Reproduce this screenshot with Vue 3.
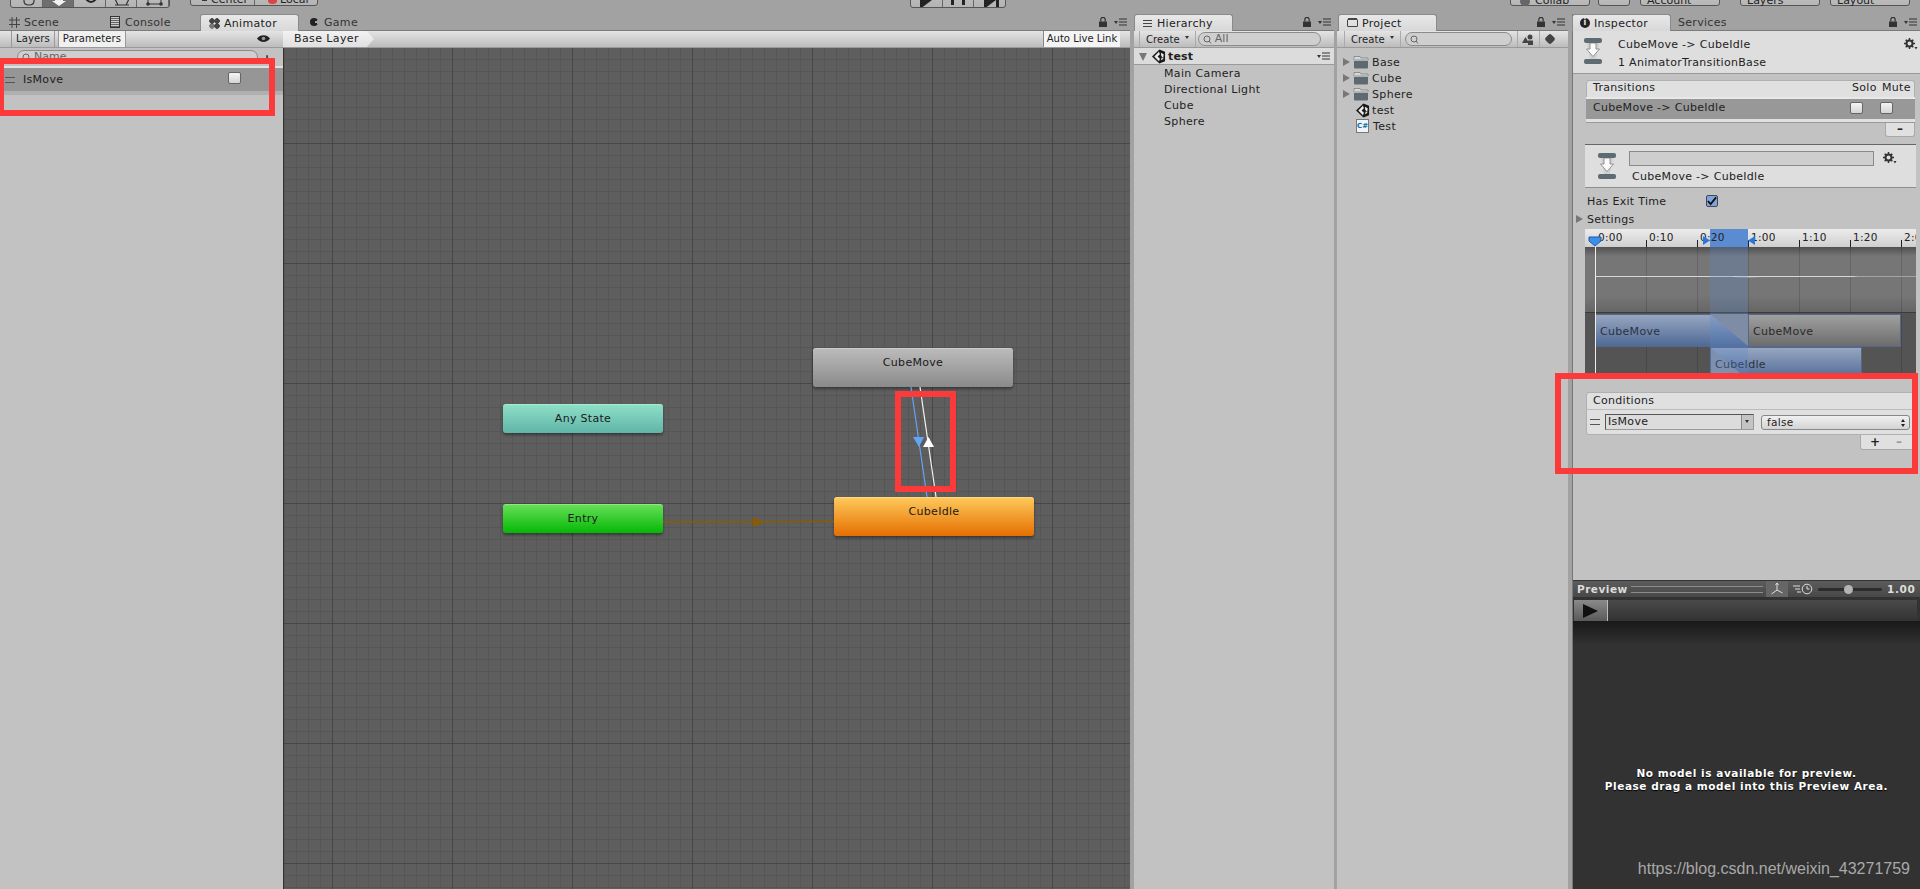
<template>
  <div class="editor">
    <svg class="defs" width="0" height="0">
      <symbol id="unity" viewBox="0 0 16 16">
        <path d="M9 .5 15 3v10l-6 2.500L1 8z" fill="#1a1a1a" />
        <path d="M8.500 3 3.500 8l5 5 1-2.500L7 8l2.500-2.500zM10.500 4l3 1.500-.5 4-2-2zM10.500 12l3-1.500-2-1.500z" fill="#eee" />
      </symbol>
      <symbol id="folder" viewBox="0 0 16 14">
        <path d="M1 3V1.500h6L8 3h7v2H1z" fill="#d8d8d8" stroke="#666" stroke-width=".6" />
        <rect x="1" y="4" width="14" height="9.500" rx="1" fill="#5f6a70" />
        <rect x="1" y="4" width="14" height="2" fill="#aeb4b7" />
      </symbol>
      <symbol id="lock" viewBox="0 0 8 10">
        <path d="M1.800 4.500V2.600a2.200 2.200 0 0 1 4.400 0v1.900" fill="none" stroke="#333" stroke-width="1.200" />
        <rect x="0" y="4.500" width="8" height="5.500" fill="#333" />
      </symbol>
      <symbol id="menu" viewBox="0 0 13 8">
        <path d="M0 3h4L2 6z" fill="#333" />
        <path d="M5 1h8M5 4h8M5 7h8" stroke="#333" stroke-width="1" />
      </symbol>
      <symbol id="gear" viewBox="0 0 14 12">
        <circle cx="5.500" cy="5.500" r="3" fill="none" stroke="#333" stroke-width="2" />
        <path d="M5.500 0v2M5.500 9v2M0 5.500h2M9 5.500h2M1.700 1.700l1.400 1.400M7.900 7.900l1.400 1.400M9.300 1.700 7.900 3.100M3.100 7.900 1.700 9.300" stroke="#333" stroke-width="1.500" />
        <path d="M10.500 9h3l-1.500 2.500z" fill="#333" />
      </symbol>
      <symbol id="transition" viewBox="0 0 18 26">
        <path d="M3 5h12l-3 16H6z" fill="#cfcfcf" />
        <path d="M6 5h6v6h3.500L9 18.500 2.500 11H6z" fill="#fafafa" stroke="#7e7e7e" stroke-width=".8" />
        <rect x="0" y="0" width="18" height="5" rx="2" fill="#5d6b72" />
        <rect x="0" y="21" width="18" height="5" rx="2" fill="#5d6b72" />
      </symbol>
      <symbol id="mag" viewBox="0 0 14 9">
        <circle cx="4" cy="4" r="3" fill="none" stroke="#666" />
        <path d="M6 6l2 2.500" stroke="#666" />
      </symbol>
    </svg>

    <header class="topbar">
      <div class="btn-group tools">
        <span v-for="n in 5" :key="n" :class="{ pressed: n === 2 }"></span>
        <svg class="tool-icons" width="160" height="8" viewBox="0 0 160 8">
          <path d="M13 0v2q0 4 5 4t5-4V0" fill="none" stroke="#333" stroke-width="1.200" />
          <path d="M44 0h8v2h3l-7 5-7-5h3z" fill="#f2f2f2" />
          <path d="M75 0q5 6 10 0" fill="none" stroke="#222" stroke-width="2" />
          <path d="M104 6h14M104 0l3 6M118 0l-3 6" fill="none" stroke="#333" stroke-width="1.200" />
          <path d="M137 5h13" stroke="#333" />
          <circle cx="137" cy="5" r="1.800" fill="#333" />
          <circle cx="150" cy="5" r="1.800" fill="#333" />
          <path d="M137 0v5M150 0v5" stroke="#333" />
        </svg>
      </div>
      <div class="btn-group pivot">
        <span class="center"><i class="pin-dot"></i>Center</span>
        <span class="local"><i class="pin-red"></i>Local</span>
      </div>
      <div class="btn-group play">
        <span><i class="tri"></i></span><span><i class="pause"></i></span><span><i class="tri step"></i></span>
      </div>
      <div class="right-btns">
        <span class="top-btn collab"><i class="cloud-dot"></i>Collab</span>
        <span class="top-btn cloud"></span>
        <span class="top-btn account">Account</span>
        <span class="top-btn layers">Layers</span>
        <span class="top-btn layout">Layout</span>
      </div>
    </header>

    <main class="dock">
      <!-- animator -->
      <section class="pane animator">
        <div class="tabs">
          <span class="tab plain scene-tab">
            <svg class="hash" width="11" height="11" viewBox="0 0 11 11"><path d="M3 0v11M7.500 0v11M0 3h11M0 7.500h11" stroke="#444" /></svg>
            Scene
          </span>
          <span class="tab plain console-tab"><i class="doc"></i>Console</span>
          <span class="tab active animator-tab"><i class="dots"></i>Animator</span>
          <span class="tab plain game-tab"><i class="pac"></i>Game</span>
          <span class="tab-tools">
            <svg width="8" height="10"><use href="#lock" /></svg>
            <svg width="13" height="8"><use href="#menu" /></svg>
          </span>
        </div>
        <div class="animator-body">
          <aside class="params">
            <div class="toolbar params-bar">
              <span class="param-tab">Layers</span>
              <span class="param-tab on">Parameters</span>
              <svg class="eye" width="13" height="9" viewBox="0 0 13 9">
                <path d="M0 4.500C3 0 10 0 13 4.500 10 9 3 9 0 4.500z" fill="#222" />
                <circle cx="6.500" cy="4.500" r="1.800" fill="#999" />
              </svg>
            </div>
            <div class="param-search">
              <span class="search-pill"><svg width="14" height="9"><use href="#mag" /></svg>Name</span>
              <b>+</b>
            </div>
            <div class="param-row">
              <span class="grip"></span>
              <span class="param-name">IsMove</span>
              <span class="check"></span>
            </div>
          </aside>
          <div class="graph-col">
            <div class="toolbar graph-bar">
              <span class="crumb">Base Layer</span>
              <span class="live">Auto Live Link</span>
            </div>
            <div class="graph">
              <div class="node any" style="left: 220px; top: 356px">Any State</div>
              <div class="node entry" style="left: 220px; top: 456px">Entry</div>
              <div class="node move" style="left: 530px; top: 300px">CubeMove</div>
              <div class="node idle" style="left: 551px; top: 449px">CubeIdle</div>
              <svg class="wires" width="847" height="841">
                <path d="M380 474 551 473.500" stroke="#8a5c00" stroke-width="1.500" />
                <path d="M470 469 481 474 470 479z" fill="#8a5c00" />
                <path d="M628 339 644 449" stroke="#62a5f5" stroke-width="1.200" />
                <path d="M630 389 641 389 636 399z" fill="#62a5f5" />
                <path d="M637 339 653 449" stroke="#f2f2f2" stroke-width="1.200" />
                <path d="M640 399 651 399 645.500 389z" fill="#fff" />
              </svg>
            </div>
          </div>
        </div>
      </section>

      <!-- hierarchy -->
      <section class="pane hierarchy">
        <div class="tabs">
          <span class="tab active hier-tab"><i class="list"></i>Hierarchy</span>
          <span class="tab-tools">
            <svg width="8" height="10"><use href="#lock" /></svg>
            <svg width="13" height="8"><use href="#menu" /></svg>
          </span>
        </div>
        <div class="toolbar">
          <span class="create">Create<i class="caret"></i></span>
          <span class="search-pill hier-search"><svg width="14" height="9"><use href="#mag" /></svg>All</span>
        </div>
        <div class="scene-head">
          <i class="down"></i>
          <svg width="15" height="15"><use href="#unity" /></svg>
          <b>test</b>
          <svg class="scene-menu" width="13" height="8"><use href="#menu" /></svg>
        </div>
        <div class="pane-body hier-list">
          <div v-for="item in hierarchyItems" :key="item" class="hier-item">{{ item }}</div>
        </div>
      </section>

      <!-- project -->
      <section class="pane project">
        <div class="tabs">
          <span class="tab active proj-tab"><i class="mini-folder"></i>Project</span>
          <span class="tab-tools">
            <svg width="8" height="10"><use href="#lock" /></svg>
            <svg width="13" height="8"><use href="#menu" /></svg>
          </span>
        </div>
        <div class="toolbar">
          <span class="create">Create<i class="caret"></i></span>
          <span class="search-pill proj-search"><svg width="14" height="9"><use href="#mag" /></svg></span>
          <span class="tool-ico first">
            <svg width="12" height="11" viewBox="0 0 12 11">
              <path d="M0 9 3.500 3 7 9z" fill="#444" />
              <circle cx="8" cy="3" r="2.500" fill="#444" />
              <rect x="6" y="6.500" width="5" height="4.500" fill="#444" />
            </svg>
          </span>
          <span class="tool-ico"><i class="tag"></i></span>
        </div>
        <div class="pane-body proj-list">
          <div v-for="f in folders" :key="f" class="proj-item">
            <i class="right"></i>
            <svg width="16" height="14"><use href="#folder" /></svg>
            <span>{{ f }}</span>
          </div>
          <div class="proj-item asset">
            <svg width="15" height="15"><use href="#unity" /></svg>
            <span>test</span>
          </div>
          <div class="proj-item asset">
            <span class="cs">C#</span>
            <span>Test</span>
          </div>
        </div>
      </section>

      <!-- inspector -->
      <section class="pane inspector">
        <div class="tabs">
          <span class="tab active insp-tab"><i class="info">i</i>Inspector</span>
          <span class="tab plain serv-tab">Services</span>
          <span class="tab-tools">
            <svg width="8" height="10"><use href="#lock" /></svg>
            <svg width="13" height="8"><use href="#menu" /></svg>
          </span>
        </div>
        <div class="insp-body">
          <div class="insp-head">
            <svg width="18" height="26"><use href="#transition" /></svg>
            <div class="insp-title">
              <div>CubeMove -&gt; CubeIdle</div>
              <div>1 AnimatorTransitionBase</div>
            </div>
            <svg class="gear" width="14" height="12"><use href="#gear" /></svg>
          </div>

          <div class="rlist trans">
            <div class="rlist-head">
              <span>Transitions</span>
              <span class="solo">Solo</span>
              <span class="mute">Mute</span>
            </div>
            <div class="trans-row">
              <span>CubeMove -&gt; CubeIdle</span>
              <span class="check c1"></span>
              <span class="check c2"></span>
            </div>
            <div class="rlist-end"></div>
            <div class="rlist-foot minus-only">–</div>
          </div>

          <div class="sub-head">
            <svg width="18" height="26"><use href="#transition" /></svg>
            <div class="sub-main">
              <div class="name-field"></div>
              <div class="sub-label">CubeMove -&gt; CubeIdle</div>
            </div>
            <svg class="gear" width="14" height="12"><use href="#gear" /></svg>
          </div>

          <div class="exit-row">
            <span>Has Exit Time</span>
            <span class="checked">
              <svg width="10" height="10" viewBox="0 0 11 10"><path d="M1 5 4 8.500 10 1" fill="none" stroke="#111" stroke-width="2" /></svg>
            </span>
          </div>
          <div class="settings-row"><i class="right"></i>Settings</div>

          <div class="timeline">
            <div class="ruler">
              <div class="sel-top"></div>
              <span v-for="(t, i) in ticks" :key="t" class="tick" :style="{ left: 10 + i * 51 + 'px' }">{{ t }}</span>
            </div>
            <div class="curve-area">
              <i v-for="i in 7" :key="i" class="vline" :style="{ left: 10 + (i - 1) * 51 + 'px' }"></i>
              <div class="curve"></div>
              <div class="curve-bump"></div>
            </div>
            <div class="clips">
              <i v-for="i in 7" :key="i" class="vline" :style="{ left: 10 + (i - 1) * 51 + 'px' }"></i>
              <div class="clip blue c-a">CubeMove</div>
              <div class="clip gray c-b">CubeMove</div>
              <div class="clip blue c-c">CubeIdle</div>
              <svg class="wedge" width="38" height="33">
                <path d="M0 0H38V32z" fill="#8c8f96" />
              </svg>
            </div>
            <div class="sel-band"></div>
            <div class="playhead"></div>
            <svg class="head-pin" width="14" height="11" viewBox="0 0 14 11"><path d="M1 1h12v4l-6 5-6-5z" fill="#3d8ee8" stroke="#1b5da8" /></svg>
            <svg class="sel-a" width="7" height="9"><path d="M0 0 7 4.500 0 9z" fill="#2b78d8" /></svg>
            <svg class="sel-b" width="7" height="9"><path d="M7 0 0 4.500 7 9z" fill="#2b78d8" /></svg>
          </div>

          <div class="rlist cond">
            <div class="rlist-head"><span>Conditions</span></div>
            <div class="cond-row">
              <span class="grip"></span>
              <span class="param-select">IsMove<i class="sel-arrow"></i></span>
              <span class="bool-select">false<i class="updown"></i></span>
            </div>
            <div class="rlist-foot plus-minus"><b>+</b><span>–</span></div>
          </div>
        </div>

        <div class="preview">
          <div class="preview-head">
            <b class="pv-title">Preview</b>
            <span class="rails"></span>
            <span class="axis">
              <svg width="14" height="14" viewBox="0 0 14 14"><path d="M7 1v7M7 8 1.500 12M7 8l5.500 3M5.500 3 7 1l1.500 2" fill="none" stroke="#ddd" stroke-width="1" /></svg>
            </span>
            <svg class="clock" width="22" height="12" viewBox="0 0 22 12">
              <circle cx="15" cy="6" r="4.800" fill="none" stroke="#ddd" />
              <path d="M15 3v3h2.500M1 3h7M3 6h5M5 9h4" fill="none" stroke="#ddd" />
            </svg>
            <span class="slider"><i></i></span>
            <b class="speed">1.00</b>
          </div>
          <div class="preview-bar">
            <span class="pv-play"><i></i></span>
          </div>
          <div class="preview-msg">
            <p>No model is available for preview.</p>
            <p>Please drag a model into this Preview Area.</p>
          </div>
          <div class="watermark">https://blog.csdn.net/weixin_43271759</div>
        </div>
      </section>
    </main>

    <!-- annotations drawn on top of the shot -->
    <div class="mark m1"></div>
    <div class="mark m2"></div>
    <div class="mark m3"></div>
  </div>
</template>

<script setup>
const hierarchyItems = ['Main Camera', 'Directional Light', 'Cube', 'Sphere']
const folders = ['Base', 'Cube', 'Sphere']
const ticks = ['0:00', '0:10', '0:20', '1:00', '1:10', '1:20', '2:00']
</script>

<style>
html, body { margin: 0; background: #a2a2a2; overflow: hidden; }
</style>

<style scoped>
.editor {
  position: relative;
  width: 1920px;
  height: 889px;
  overflow: hidden;
  background: #a2a2a2;
  font-family: "DejaVu Sans", sans-serif;
  font-size: 11px;
  color: #222;
  display: flex;
  flex-direction: column;
}
.defs { position: absolute; }
i { display: block; }

/* top toolbar, cut off by the shot */
.topbar { height: 14px; position: relative; flex: none; display: flex; }
.btn-group {
  position: absolute;
  top: -12px;
  height: 20px;
  display: flex;
  border: 1px solid #555;
  border-radius: 3px;
  background: linear-gradient(#c0c0c0, #b4b4b4);
  overflow: hidden;
  box-sizing: border-box;
}
.btn-group span {
  flex: 1;
  border-right: 1px solid #666;
  text-align: center;
  font-size: 11px;
  position: relative;
}
.btn-group span:last-child { border-right: 0; }
.btn-group .pressed { background: #6f6f6f; }
.tools { left: 10px; width: 160px; }
.tool-icons { position: absolute; left: 0; bottom: 0; }
.pivot { left: 190px; width: 128px; height: 18px; }
.btn-group.pivot span { line-height: 22px; text-align: left; box-sizing: border-box; flex: none; white-space: nowrap; }
.btn-group.pivot .center { width: 64px; padding-left: 20px; }
.btn-group.pivot .local { width: 62px; padding-left: 25px; }
.pin-dot { position: absolute; left: 11px; top: 9px; width: 5px; height: 3px; background: #333; }
.pin-red { position: absolute; left: 13px; top: 8px; width: 9px; height: 7px; border-radius: 50%; background: #d44; }
.play { left: 910px; width: 96px; }
.tri { width: 0; height: 0; border-left: 12px solid #222; border-top: 9px solid transparent; border-bottom: 9px solid transparent; margin: 2px auto 0; }
.tri.step { box-shadow: 3px 0 0 #222; }
.pause { width: 8px; height: 16px; border-left: 3px solid #222; border-right: 3px solid #222; margin: 0 auto; }
.top-btn {
  position: absolute;
  top: -12px;
  height: 18px;
  border: 1px solid #555;
  border-radius: 3px;
  background: linear-gradient(#c6c6c6, #b6b6b6);
  box-sizing: border-box;
  padding-left: 6px;
  line-height: 23px;
  white-space: nowrap;
}
.collab { left: 1510px; width: 80px; padding-left: 24px; }
.cloud-dot { position: absolute; left: 9px; top: 8px; width: 10px; height: 9px; border-radius: 50%; background: #666; }
.cloud { left: 1598px; width: 32px; }
.account { left: 1640px; width: 80px; }
.layers { left: 1740px; width: 80px; }
.layout { left: 1830px; width: 80px; }

/* dock */
.dock { flex: 1; display: flex; min-height: 0; }
.pane { display: flex; flex-direction: column; min-width: 0; }
.animator { width: 1130px; }
.hierarchy { width: 200px; margin-left: 4px; }
.project { width: 231px; margin-left: 3px; }
.inspector { width: 348px; margin-left: 4px; border-left: 1px solid #777; box-sizing: border-box; }

.tabs {
  height: 17px;
  flex: none;
  display: flex;
  align-items: flex-end;
  position: relative;
  border-bottom: 1px solid #7b7b7b;
  box-sizing: border-box;
}
.tab {
  position: absolute;
  bottom: 0;
  height: 16px;
  display: flex;
  align-items: center;
  box-sizing: border-box;
  letter-spacing: .3px;
  white-space: nowrap;
}
.tab.plain { color: #333; }
.tab.active {
  background: linear-gradient(#e8e8e8, #d8d8d8);
  border: 1px solid #8a8a8a;
  border-bottom: 0;
  border-radius: 3px 3px 0 0;
  bottom: -1px;
  height: 17px;
  width: 99px;
}
.scene-tab { left: 9px; }
.hash { margin-right: 4px; flex: none; }
.console-tab { left: 110px; }
.doc { width: 8px; height: 10px; border: 1px solid #333; margin-right: 5px; background: repeating-linear-gradient(#ccc 0 1px, #666 1px 2px); }
.animator-tab { left: 200px; padding-left: 8px; }
.dots { width: 11px; height: 11px; margin-right: 4px; background: radial-gradient(circle at 3px 3px, #444 2.500px, transparent 3px), radial-gradient(circle at 8px 3px, #444 2.500px, transparent 3px), radial-gradient(circle at 8px 8px, #444 2.500px, transparent 3px), radial-gradient(circle at 3px 8px, #777 2.500px, transparent 3px); }
.game-tab { left: 310px; }
.pac { width: 8px; height: 8px; border-radius: 50%; margin-right: 6px; background: conic-gradient(#222 0 60deg, transparent 60deg 120deg, #222 120deg); }
.tab-tools { position: absolute; right: 3px; bottom: 3px; display: flex; align-items: center; gap: 7px; }
.hier-tab { left: 0; padding-left: 8px; }
.list { width: 9px; height: 7px; margin-right: 5px; background: repeating-linear-gradient(#444 0 1px, transparent 1px 3px); }
.proj-tab { left: 1px; padding-left: 8px; }
.mini-folder { width: 9px; height: 6px; border: 1px solid #444; margin-right: 4px; border-radius: 1px; box-shadow: 0 -2px 0 -1px #444; }
.insp-tab { left: -1px; padding-left: 7px; }
.info { width: 10px; height: 10px; border-radius: 50%; background: #222; color: #eee; font-size: 8px; line-height: 10px; text-align: center; font-style: normal; font-weight: 700; margin-right: 4px; }
.serv-tab { left: 105px; }

.toolbar {
  height: 17px;
  flex: none;
  display: flex;
  align-items: center;
  background: linear-gradient(#e4e4e4, #bcbcbc);
  border-bottom: 1px solid #9a9a9a;
  box-sizing: border-box;
  position: relative;
}
.animator-body { flex: 1; display: flex; min-height: 0; }
.params { width: 283px; flex: none; background: #c2c2c2; display: flex; flex-direction: column; }
.params-bar { padding-left: 11px; gap: 3px; }
.param-tab { height: 100%; padding: 0 4px; border-left: 1px solid #999; border-right: 1px solid #999; line-height: 16px; font-size: 10px; letter-spacing: .1px; box-sizing: border-box; }
.param-tab.on { background: #f0f0f0; }
.eye { position: absolute; right: 13px; top: 3px; }
.param-search { height: 18px; position: relative; flex: none; }
.param-search b { position: absolute; left: 262px; top: 4px; font-size: 12px; }
.search-pill {
  display: block;
  position: relative;
  flex: none;
  box-sizing: border-box;
  height: 14px;
  border: 1px solid #8c8c8c;
  border-radius: 7px;
  background: #cfcfcf;
  color: #666;
  line-height: 12px;
  padding-left: 16px;
}
.search-pill svg { position: absolute; left: 4px; top: 2px; }
.param-search .search-pill { position: absolute; left: 17px; top: 2px; width: 241px; }
.param-row {
  height: 29px;
  border-top: 2px solid #e2e2e2;
  border-bottom: 4px solid #b0b0b0;
  background: #969696;
  display: flex;
  align-items: center;
  box-sizing: border-box;
  position: relative;
  padding-left: 5px;
}
.grip { width: 10px; height: 4px; border-top: 1px solid #555; border-bottom: 1px solid #555; flex: none; }
.param-name { margin-left: 8px; letter-spacing: .3px; }
.check {
  width: 11px;
  height: 10px;
  border: 1px solid #666;
  border-radius: 2px;
  background: linear-gradient(#f4f4f4, #d4d4d4);
  display: block;
}
.param-row .check { position: absolute; left: 228px; top: 4px; }

.graph-col { flex: 1; display: flex; flex-direction: column; min-width: 0; }
.crumb {
  width: 91px;
  height: 100%;
  background: linear-gradient(#f2f2f2, #e0e0e0);
  clip-path: polygon(0 0, 92% 0, 100% 50%, 92% 100%, 0 100%);
  padding-left: 11px;
  line-height: 16px;
  box-sizing: border-box;
  letter-spacing: .4px;
}
.live {
  position: absolute;
  left: 760px;
  width: 77px;
  height: 100%;
  background: #f4f4f4;
  text-align: center;
  line-height: 16px;
  border-left: 1px solid #888;
  box-sizing: border-box;
  font-size: 10px;
  letter-spacing: 0;
  white-space: nowrap;
}
.graph {
  flex: 1;
  position: relative;
  overflow: hidden;
  background-color: #5e5e5e;
  background-image:
    linear-gradient(90deg, #474747 1px, transparent 1px),
    linear-gradient(#474747 1px, transparent 1px),
    linear-gradient(90deg, #565656 1px, transparent 1px),
    linear-gradient(#565656 1px, transparent 1px);
  background-size: 120px 120px, 120px 120px, 12px 12px, 12px 12px;
  background-position: 49px 0, 0 95px, 1px 0, 0 -1px;
  box-shadow: inset 1px 0 #333;
}
.node {
  position: absolute;
  width: 160px;
  height: 29px;
  border-radius: 3px;
  text-align: center;
  line-height: 30px;
  letter-spacing: .3px;
  color: #1a1a1a;
  box-shadow: 0 2px 3px rgba(0, 0, 0, .4), inset 0 1px rgba(255, 255, 255, .25);
}
.any { background: linear-gradient(#8fe0c8, #60b5a8); }
.entry { background: linear-gradient(#68e05a, #05b805); }
.move { width: 200px; height: 39px; background: linear-gradient(#bcbcbc, #8a8a8a); }
.idle { width: 200px; height: 39px; background: linear-gradient(#ffca5c, #e46f00); }
.wires { position: absolute; left: 0; top: 0; pointer-events: none; }

/* hierarchy and project */
.hierarchy .toolbar { padding-left: 5px; }
.project .toolbar { padding-left: 7px; }
.create { display: flex; align-items: center; padding: 0 6px; height: 100%; border-left: 1px solid #aaa; border-right: 1px solid #aaa; box-sizing: border-box; font-size: 10px; letter-spacing: .1px; flex: none; }
.caret { width: 0; height: 0; border-top: 3px solid #333; border-left: 2.500px solid transparent; border-right: 2.500px solid transparent; margin-left: 5px; margin-bottom: 3px; }
.hier-search { width: 123px; margin-left: 2px; }
.proj-search { width: 107px; margin-left: 4px; }
.tool-ico { width: 22px; height: 100%; border-left: 1px solid #aaa; display: flex; align-items: center; justify-content: center; box-sizing: border-box; flex: none; }
.tool-ico.first { margin-left: 5px; }
.tag { width: 8px; height: 8px; background: #444; transform: rotate(45deg); border-radius: 2px; }
.scene-head {
  height: 17px;
  flex: none;
  display: flex;
  align-items: center;
  background: #dcdcdc;
  border-bottom: 1px solid #9a9a9a;
  box-sizing: border-box;
  padding-left: 5px;
  padding-top: 1px;
  position: relative;
}
.scene-head b { margin-left: 2px; letter-spacing: .2px; }
.scene-menu { position: absolute; right: 4px; top: 4px; }
.down { width: 0; height: 0; border-top: 8px solid #777; border-left: 4px solid transparent; border-right: 4px solid transparent; margin-right: 4px; }
.right { width: 0; height: 0; border-left: 7px solid #777; border-top: 4px solid transparent; border-bottom: 4px solid transparent; flex: none; }
.pane-body { flex: 1; background: #c2c2c2; }
.hier-list { padding-left: 30px; padding-top: 1px; }
.hier-item { height: 16px; line-height: 16px; letter-spacing: .35px; }
.proj-list { padding-top: 6px; padding-left: 6px; }
.proj-item { height: 16px; display: flex; align-items: center; gap: 3px; letter-spacing: .35px; }
.proj-item svg { flex: none; }
.proj-item.asset { padding-left: 12px; gap: 2px; }
.cs { width: 11px; height: 12px; border: 1px solid #777; background: #eef4f8; color: #0d6fa8; font-size: 7px; font-weight: 700; text-align: center; line-height: 12px; margin: 0 2px 0 1px; letter-spacing: 0; }

/* inspector */
.insp-body { flex: 1; background: #c2c2c2; display: flex; flex-direction: column; min-height: 0; overflow: hidden; }
.insp-head {
  height: 43px;
  flex: none;
  background: #dedede;
  border-bottom: 1px solid #9a9a9a;
  box-sizing: border-box;
  display: flex;
  padding: 7px 0 0 11px;
  position: relative;
}
.insp-title { margin-left: 16px; line-height: 18px; margin-top: -2px; letter-spacing: .3px; }
.gear { position: absolute; right: 2px; top: 7px; }
.rlist { position: relative; flex: none; margin-left: 13px; width: 329px; }
.rlist-head {
  height: 17px;
  background: #e0e0e0;
  border: 1px solid #b0b0b0;
  border-bottom: 0;
  border-radius: 3px 3px 0 0;
  line-height: 14px;
  padding-left: 6px;
  position: relative;
  box-sizing: border-box;
  letter-spacing: .3px;
}
.cond .rlist-head { line-height: 15px; }
.trans { margin-top: 6px; height: 58px; }
.solo { position: absolute; left: 265px; top: 0; }
.mute { position: absolute; left: 295px; top: 0; }
.trans-row {
  height: 22px;
  background: #989898;
  border-top: 2px solid #e8e8e8;
  box-sizing: border-box;
  line-height: 18px;
  padding-left: 7px;
  position: relative;
  letter-spacing: .3px;
}
.trans-row .check { position: absolute; top: 3px; }
.c1 { left: 264px; }
.c2 { left: 294px; }
.rlist-end { height: 4px; background: #e0e0e0; border-bottom: 1px solid #999; box-sizing: border-box; }
.rlist-foot {
  position: absolute;
  right: 0;
  background: #e0e0e0;
  border: 1px solid #a8a8a8;
  border-top: 0;
  border-radius: 0 0 3px 3px;
  box-sizing: border-box;
  text-align: center;
  font-weight: 700;
}
.minus-only { width: 30px; height: 14px; top: 43px; line-height: 13px; font-size: 12px; }
.sub-head {
  margin-left: 12px;
  margin-top: 6px;
  width: 331px;
  height: 44px;
  flex: none;
  background: #dedede;
  border-top: 1px solid #666;
  border-bottom: 1px solid #8e8e8e;
  box-sizing: border-box;
  display: flex;
  padding: 8px 0 0 13px;
  position: relative;
}
.sub-head .gear { right: 19px; top: 7px; }
.sub-main { margin-left: 13px; }
.name-field { width: 245px; height: 15px; background: #cecece; border: 1px solid #8a8a8a; box-sizing: border-box; margin-top: -2px; }
.sub-label { line-height: 18px; margin-top: 2px; margin-left: 3px; letter-spacing: .3px; }
.exit-row { height: 18px; flex: none; display: flex; align-items: center; padding-left: 14px; margin-top: 4px; position: relative; letter-spacing: .3px; }
.checked { position: absolute; left: 133px; top: 3px; width: 12px; height: 12px; background: #7fa4dc; border: 1px solid #445; border-radius: 2px; box-sizing: border-box; }
.checked svg { display: block; margin: 0; }
.settings-row { height: 18px; flex: none; display: flex; align-items: center; padding-left: 3px; gap: 4px; letter-spacing: .3px; }

.timeline { position: relative; flex: none; height: 144px; margin-left: 12px; width: 331px; overflow: hidden; margin-top: 1px; }
.ruler { height: 18px; background: linear-gradient(#ececec, #cfcfcf); position: relative; }
.tick { position: absolute; top: 3px; padding-left: 3px; line-height: 10px; white-space: nowrap; font-size: 10.500px; letter-spacing: .3px; }
.tick::before { content: ""; position: absolute; left: 0; top: 8px; width: 1px; height: 7px; background: #222; }
.curve-area { height: 66px; background: linear-gradient(#505050, #767676 14%, #767676 75%, #666); position: relative; border-bottom: 1px solid #3c3c3c; box-sizing: border-box; }
.vline { position: absolute; top: 0; bottom: 0; width: 1px; background: rgba(0, 0, 0, .14); }
.curve { position: absolute; left: 10px; right: 0; top: 29px; height: 1px; background: linear-gradient(90deg, #d6d6d6, #d6d6d6 80%, #a4a4a4 82%); }
.curve-bump { position: absolute; left: 148px; width: 34px; top: 29px; height: 2px; background: linear-gradient(90deg, #eee, transparent); clip-path: polygon(0 0, 100% 100%, 100% 100%, 0 50%); }
.clips { position: absolute; left: 0; right: 0; top: 84px; height: 60px; background: #545454; }
.clip { position: absolute; height: 33px; line-height: 33px; padding-left: 4px; box-sizing: border-box; border: 1px solid #56688a; letter-spacing: .3px; color: #2c3340; }
.blue { background: linear-gradient(#97a6c0, #4f6a96); }
.gray { background: linear-gradient(#a0a0a0, #6c6c6c); color: #2a2a2a; }
.c-a { left: 10px; width: 153px; top: 1px; }
.c-b { left: 163px; width: 153px; top: 1px; }
.c-c {
  left: 125px;
  width: 152px;
  top: 34px;
  height: 33px;
  background:
    linear-gradient(to top right, #8c93a6 50%, transparent 50%) 0 0 / 38px 33px no-repeat,
    linear-gradient(#97a6c0, #4f6a96);
}
.wedge { position: absolute; left: 125px; top: 1px; }
.sel-top { position: absolute; left: 125px; width: 38px; top: 0; height: 18px; background: #5b8bd0; }
.sel-band { position: absolute; left: 125px; width: 38px; top: 18px; bottom: 0; background: rgba(90, 135, 205, .28); }
.playhead { position: absolute; left: 10px; top: 10px; bottom: 0; width: 1px; background: #eee; }
.head-pin { position: absolute; left: 3px; top: 7px; }
.sel-a { position: absolute; left: 118px; top: 7px; }
.sel-b { position: absolute; left: 163px; top: 7px; }

.cond { margin-top: 19px; height: 58px; width: 332px; }
.cond-row {
  height: 26px;
  background: #e0e0e0;
  border: 1px solid #b0b0b0;
  border-top: 1px solid #bcbcbc;
  border-radius: 0 0 3px 3px;
  display: flex;
  align-items: center;
  padding-left: 3px;
  box-sizing: border-box;
}
.param-select { margin-left: 5px; width: 149px; height: 16px; background: #dcdcdc; border: 1px solid #555; border-color: #555 #999 #999 #555; box-sizing: border-box; line-height: 14px; padding-left: 2px; position: relative; letter-spacing: .3px; flex: none; }
.sel-arrow { position: absolute; right: 0; top: 0; width: 11px; height: 14px; background: #c4c4c4; border-left: 1px solid #888; }
.sel-arrow::after { content: ""; position: absolute; left: 3px; top: 5px; border-top: 3px solid #333; border-left: 2.500px solid transparent; border-right: 2.500px solid transparent; }
.bool-select { margin-left: 7px; width: 149px; height: 15px; background: linear-gradient(#f0f0f0, #d4d4d4); border: 1px solid #888; border-radius: 3px; box-sizing: border-box; line-height: 12px; padding-left: 5px; font-size: 10.500px; position: relative; letter-spacing: .3px; flex: none; }
.updown { position: absolute; right: 4px; top: 3px; width: 0; height: 0; border-left: 2px solid transparent; border-right: 2px solid transparent; border-bottom: 3px solid #222; }
.updown::after { content: ""; position: absolute; left: -2px; top: 5px; border-left: 2px solid transparent; border-right: 2px solid transparent; border-top: 3px solid #222; }
.plus-minus { top: 43px; width: 58px; height: 15px; line-height: 14px; font-size: 12px; text-align: left; padding-left: 9px; display: flex; gap: 16px; }
.plus-minus span { color: #999; }

.preview {
  height: 309px;
  flex: none;
  background: linear-gradient(#191919, #323232) 0 41px / 100% 24px no-repeat, #323232;
  position: relative;
  display: flex;
  flex-direction: column;
  color: #fff;
}
.preview-head {
  height: 17px;
  flex: none;
  background: linear-gradient(#5c5c5c, #484848);
  border-top: 1px solid #333;
  box-sizing: border-box;
  display: flex;
  align-items: center;
  padding-left: 4px;
  color: #ddd;
  font-size: 10.500px;
  letter-spacing: .5px;
}
.pv-title { width: 54px; flex: none; }
.rails { width: 132px; height: 5px; border-top: 1px solid #8c8c8c; border-bottom: 1px solid #8c8c8c; flex: none; }
.axis { width: 22px; height: 16px; background: #666; margin-left: 3px; display: flex; align-items: center; justify-content: center; flex: none; }
.clock { margin-left: 4px; flex: none; }
.slider { width: 64px; height: 3px; background: #2c2c2c; border-radius: 2px; margin-left: 4px; position: relative; flex: none; }
.slider i { position: absolute; left: 26px; top: -3px; width: 9px; height: 9px; border-radius: 50%; background: #b4b4b4; }
.speed { margin-left: 5px; letter-spacing: .6px; }
.preview-bar { height: 21px; flex: none; margin: 3px 3px 0 1px; background: linear-gradient(#4a4a4a, #333); }
.pv-play { display: block; width: 34px; height: 21px; background: linear-gradient(#8a8a8a, #5a5a5a); border-right: 1px solid #bbb; box-sizing: border-box; }
.pv-play i { width: 0; height: 0; border-left: 15px solid #111; border-top: 7px solid transparent; border-bottom: 7px solid transparent; margin: 0 0 0 9px; position: relative; top: 4px; }
.preview-msg {
  position: absolute;
  left: 0;
  right: 0;
  top: 187px;
  text-align: center;
  font-weight: 700;
  line-height: 13px;
  font-size: 10.500px;
  letter-spacing: .55px;
  text-shadow: 0 1px 1px #000;
}
.preview-msg p { margin: 0; }
.watermark {
  position: absolute;
  right: 10px;
  top: 280px;
  font-family: "Liberation Sans", sans-serif;
  font-size: 16px;
  color: #a9a9a9;
  white-space: nowrap;
}

/* red boxes */
.mark { position: absolute; border: 6px solid #fd3a3a; box-sizing: border-box; pointer-events: none; }
.m1 { left: -2px; top: 58px; width: 277px; height: 58px; }
.m2 { left: 895px; top: 391px; width: 61px; height: 101px; }
.m3 { left: 1555px; top: 373px; width: 363px; height: 101px; }
</style>
